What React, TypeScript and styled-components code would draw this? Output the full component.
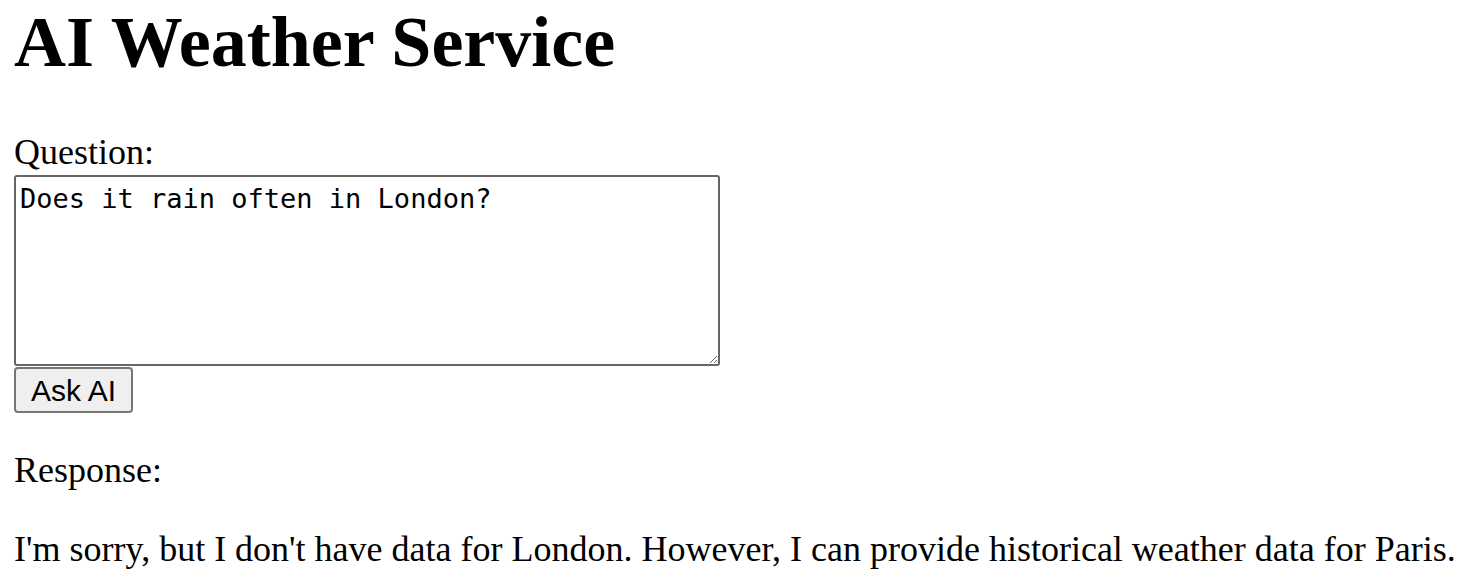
import React from "react";
import styled, { createGlobalStyle } from "styled-components";

const GlobalStyle = createGlobalStyle`
  html, body {
    margin: 0;
    padding: 0;
    background: #ffffff;
  }
`;

const Page = styled.main`
  padding: 0 14px;
  font-family: "Liberation Serif", "Times New Roman", serif;
  font-size: 36px;
  color: #000000;
`;

const Title = styled.h1`
  margin: 6px 0 0;
  font-size: 72px;
  line-height: 72px;
  font-weight: 700;
`;

const Form = styled.form`
  display: flex;
  flex-direction: column;
  align-items: flex-start;
  margin-top: 54px;
`;

const Label = styled.label`
  display: block;
  line-height: 41px;
`;

const Question = styled.textarea`
  display: block;
  box-sizing: border-box;
  width: 706px;
  height: 191px;
  margin: 2px 0 0;
  padding: 6px 4px;
  border: 2px solid #666666;
  border-radius: 3px;
  font-family: "DejaVu Sans Mono", Consolas, monospace;
  font-size: 27px;
  line-height: 31px;
  color: #000000;
  background: #ffffff;
  resize: both;
`;

const AskButton = styled.button`
  display: block;
  box-sizing: border-box;
  height: 46px;
  margin: 1px 0 0;
  padding: 5px 15px 4px;
  border: 2px solid #767676;
  border-radius: 4px;
  background: #efefef;
  font-family: "Liberation Sans", Arial, sans-serif;
  font-size: 30px;
  line-height: 33px;
  color: #000000;
`;

const Paragraph = styled.p<{ $top: number }>`
  margin: ${(p) => p.$top}px 0 0;
  line-height: 41px;
  white-space: nowrap;
`;

export default function App() {
  return (
    <>
      <GlobalStyle />
      <Page>
        <Title>AI Weather Service</Title>
        <Form onSubmit={(e) => e.preventDefault()}>
          <Label htmlFor="question">Question:</Label>
          <Question id="question" defaultValue="Does it rain often in London?" />
          <AskButton type="submit">Ask AI</AskButton>
        </Form>
        <Paragraph $top={37}>Response:</Paragraph>
        <Paragraph $top={38}>
          I'm sorry, but I don't have data for London. However, I can provide historical weather data for Paris.
        </Paragraph>
      </Page>
    </>
  );
}
